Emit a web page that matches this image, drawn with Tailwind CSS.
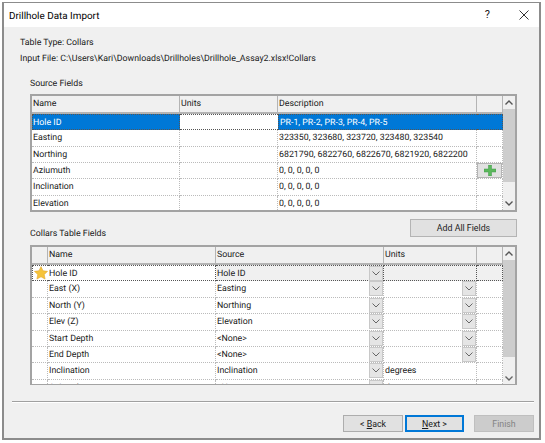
<!DOCTYPE html>
<html lang="en">
<head>
    <meta charset="UTF-8">
    <title>Drillhole Data Import</title>
    <script src="https://cdn.jsdelivr.net/npm/@tailwindcss/browser@4"></script>
</head>
<body class="bg-white overflow-hidden">
    <div class="w-[545px] h-[443px] pt-[2px] pl-[2px] font-['Roboto',sans-serif] text-[8.8px] leading-[14px] text-[#1a1a1a] whitespace-nowrap [text-rendering:geometricPrecision]">
        <div class="w-[539px] h-[438px] border-2 border-t-[1px] border-[#8c8c8c] bg-[#f0f0f0] flex flex-col">
            <!-- title bar -->
            <div class="h-[24px] bg-white flex items-center justify-between shrink-0">
                <span class="ml-[5px] mt-[3px] text-[9.9px] text-black">Drillhole Data Import</span>
                <div class="flex items-center">
                    <span class="text-[11px] mr-[29px]">?</span>
                    <svg class="mr-[10px]" width="10" height="10" viewBox="0 0 10 10"><path d="M.5.5l9 9M9.5.5l-9 9" stroke="#333" stroke-width="1" fill="none"/></svg>
                </div>
            </div>
            <div class="pl-[16px] pt-[9px]">
                <div class="h-[16px]">Table Type: Collars</div>
                <div class="h-[16px]">Input File: C:\Users\Kari\Downloads\Drillholes\Drillhole_Assay2.xlsx!Collars</div>
            </div>
            <div class="pl-[26px] pt-[9px] h-[26px]">Source Fields</div>

            <!-- source fields table -->
            <div class="ml-[26px] w-[487px] h-[118px] border-2 border-[#a3a3a3] flex overflow-hidden shrink-0">
                <div class="w-[471px]">
                    <div class="grid grid-cols-[148px_98px_199px_26px] h-[18px] border-b-2 border-[#b4b4b4] leading-[16px]">
                        <div class="border-r border-[#b4b4b4] pl-[1px]">Name</div>
                        <div class="border-r border-[#b4b4b4] pl-[1px]">Units</div>
                        <div class="border-r border-[#b4b4b4] pl-[1px]">Description</div>
                        <div class="border-r border-[#b4b4b4]"></div>
                    </div>
                    <div class="grid grid-cols-[148px_98px_199px_26px] auto-rows-[16.33px] bg-white leading-[16px]">
                        <div class="bg-[#0078d7] text-white border border-dotted border-[#555]">Hole ID</div>
                        <div class="border-y border-dotted border-[#555]"></div>
                        <div class="bg-[#0078d7] text-white border-y border-l border-dotted border-[#555] pl-[1px]">PR-1, PR-2, PR-3, PR-4, PR-5</div>
                        <div class="bg-[#0078d7] border-y border-r border-dotted border-[#555]"></div>

                        <div class="border-b border-r border-dotted border-[#bbb] pl-[1px]">Easting</div>
                        <div class="border-b border-r border-dotted border-[#bbb]"></div>
                        <div class="border-b border-r border-dotted border-[#bbb] pl-[1px]">323350, 323680, 323720, 323480, 323540</div>
                        <div class="border-b border-r border-dotted border-[#bbb]"></div>

                        <div class="border-b border-r border-dotted border-[#bbb] pl-[1px]">Northing</div>
                        <div class="border-b border-r border-dotted border-[#bbb]"></div>
                        <div class="border-b border-r border-dotted border-[#bbb] pl-[1px]">6821790, 6822760, 6822670, 6821920, 6822200</div>
                        <div class="border-b border-r border-dotted border-[#bbb]"></div>

                        <div class="border-b border-r border-dotted border-[#bbb] pl-[1px]">Aziumuth</div>
                        <div class="border-b border-r border-dotted border-[#bbb]"></div>
                        <div class="border-b border-r border-dotted border-[#bbb] pl-[1px]">0, 0, 0, 0, 0</div>
                        <div class="border-b border-r border-dotted border-[#bbb] flex items-center justify-center">
                            <div class="w-[25px] h-[15px] bg-[#e1e1e1] border border-[#b4b4b4] flex items-center justify-center">
                                <svg width="12" height="11" viewBox="0 0 12 11"><path d="M4.5 0h3v4H12v3H7.5v4h-3V7H0V4h4.5z" fill="#5cb85c" stroke="#3c9a48" stroke-width=".5"/></svg>
                            </div>
                        </div>

                        <div class="border-b border-r border-dotted border-[#bbb] pl-[1px]">Inclination</div>
                        <div class="border-b border-r border-dotted border-[#bbb]"></div>
                        <div class="border-b border-r border-dotted border-[#bbb] pl-[1px]">0, 0, 0, 0, 0</div>
                        <div class="border-b border-r border-dotted border-[#bbb]"></div>

                        <div class="border-r border-dotted border-[#bbb] pl-[1px]">Elevation</div>
                        <div class="border-r border-dotted border-[#bbb]"></div>
                        <div class="border-r border-dotted border-[#bbb] pl-[1px]">0, 0, 0, 0, 0</div>
                        <div class="border-r border-dotted border-[#bbb]"></div>
                    </div>
                </div>
                <!-- scrollbar -->
                <div class="w-[12px] bg-[#f0f0f0] flex flex-col items-center">
                    <div class="h-[13px] flex items-center justify-center shrink-0">
                        <svg width="8" height="5" viewBox="0 0 8 5"><path d="M.5 4.5L4 1l3.5 3.5" stroke="#555" stroke-width="1.4" fill="none"/></svg>
                    </div>
                    <div class="w-full h-[73px] bg-[#cdcdcd] shrink-0"></div>
                    <div class="h-[14px] mt-[14px] flex items-center justify-center shrink-0">
                        <svg width="8" height="5" viewBox="0 0 8 5"><path d="M.5.5L4 4 7.5.5" stroke="#555" stroke-width="1.4" fill="none"/></svg>
                    </div>
                </div>
            </div>

            <div class="ml-[26px] w-[487px] flex items-start justify-between h-[33px] shrink-0">
                <span class="mt-[15px]">Collars Table Fields</span>
                <button class="mt-[7px] w-[107px] h-[18px] bg-[#e1e1e1] border border-[#b4b4b4] text-[8.8px] leading-[14px]">Add All Fields</button>
            </div>

            <!-- collars table -->
            <div class="ml-[26px] w-[487px] h-[140px] border-2 border-b-[1px] border-[#a3a3a3] flex overflow-hidden shrink-0">
                <div class="w-[471px]">
                    <div class="grid grid-cols-[16px_168px_168px_93px_26px] h-[18px] border-b-2 border-[#b4b4b4] leading-[17px]">
                        <div class="border-r border-[#b4b4b4]"></div>
                        <div class="border-r border-[#b4b4b4] pl-[1px]">Name</div>
                        <div class="border-r border-[#b4b4b4] pl-[1px]">Source</div>
                        <div class="border-r border-[#b4b4b4] pl-[1px]">Units</div>
                        <div class="border-r border-[#b4b4b4]"></div>
                    </div>
                    <div class="grid grid-cols-[16px_168px_168px_93px_26px] auto-rows-[16.4px] bg-white leading-[16px]">
                        <div class="border-y border-l border-dotted border-[#555] flex items-center justify-center">
                            <svg width="14" height="14" viewBox="0 0 24 24"><path d="M12 1l3.4 7.2 7.9 1-5.8 5.4 1.5 7.8-7-3.9-7 3.9 1.5-7.8L.7 9.2l7.9-1z" fill="#f5c33b" stroke="#e3a62a" stroke-width="1"/></svg>
                        </div>
                        <div class="border-y border-r border-dotted border-[#555] pl-[1px]">Hole ID</div>
                        <div class="border-y border-r border-dotted border-[#555] bg-[#f0f0f0] pl-[1px] flex justify-between">
                            <span>Hole ID</span>
                            <span class="w-[14px] h-[15px] bg-[#e5e5e5] border border-[#c8c8c8] flex items-center justify-center shrink-0"><svg width="8" height="5" viewBox="0 0 8 5"><path d="M.5.5L4 4 7.5.5" stroke="#666" fill="none"/></svg></span>
                        </div>
                        <div class="border-y border-r border-dotted border-[#555] bg-[#f0f0f0]"></div>
                        <div class="border-y border-r border-dotted border-[#555] bg-[#f0f0f0]"></div>

                        <div class="border-b border-r border-dotted border-[#bbb]"></div>
                        <div class="border-b border-r border-dotted border-[#bbb] pl-[1px]">East (X)</div>
                        <div class="border-b border-r border-dotted border-[#bbb] pl-[1px] flex justify-between">
                            <span>Easting</span>
                            <span class="w-[14px] h-[15px] bg-[#e5e5e5] border border-[#c8c8c8] flex items-center justify-center shrink-0"><svg width="8" height="5" viewBox="0 0 8 5"><path d="M.5.5L4 4 7.5.5" stroke="#666" fill="none"/></svg></span>
                        </div>
                        <div class="border-b border-r border-dotted border-[#bbb] flex justify-end">
                            <span class="w-[14px] h-[15px] bg-[#e5e5e5] border border-[#c8c8c8] flex items-center justify-center shrink-0"><svg width="8" height="5" viewBox="0 0 8 5"><path d="M.5.5L4 4 7.5.5" stroke="#666" fill="none"/></svg></span>
                        </div>
                        <div class="border-b border-r border-dotted border-[#bbb]"></div>

                        <div class="border-b border-r border-dotted border-[#bbb]"></div>
                        <div class="border-b border-r border-dotted border-[#bbb] pl-[1px]">North (Y)</div>
                        <div class="border-b border-r border-dotted border-[#bbb] pl-[1px] flex justify-between">
                            <span>Northing</span>
                            <span class="w-[14px] h-[15px] bg-[#e5e5e5] border border-[#c8c8c8] flex items-center justify-center shrink-0"><svg width="8" height="5" viewBox="0 0 8 5"><path d="M.5.5L4 4 7.5.5" stroke="#666" fill="none"/></svg></span>
                        </div>
                        <div class="border-b border-r border-dotted border-[#bbb] flex justify-end">
                            <span class="w-[14px] h-[15px] bg-[#e5e5e5] border border-[#c8c8c8] flex items-center justify-center shrink-0"><svg width="8" height="5" viewBox="0 0 8 5"><path d="M.5.5L4 4 7.5.5" stroke="#666" fill="none"/></svg></span>
                        </div>
                        <div class="border-b border-r border-dotted border-[#bbb]"></div>

                        <div class="border-b border-r border-dotted border-[#bbb]"></div>
                        <div class="border-b border-r border-dotted border-[#bbb] pl-[1px]">Elev (Z)</div>
                        <div class="border-b border-r border-dotted border-[#bbb] pl-[1px] flex justify-between">
                            <span>Elevation</span>
                            <span class="w-[14px] h-[15px] bg-[#e5e5e5] border border-[#c8c8c8] flex items-center justify-center shrink-0"><svg width="8" height="5" viewBox="0 0 8 5"><path d="M.5.5L4 4 7.5.5" stroke="#666" fill="none"/></svg></span>
                        </div>
                        <div class="border-b border-r border-dotted border-[#bbb] flex justify-end">
                            <span class="w-[14px] h-[15px] bg-[#e5e5e5] border border-[#c8c8c8] flex items-center justify-center shrink-0"><svg width="8" height="5" viewBox="0 0 8 5"><path d="M.5.5L4 4 7.5.5" stroke="#666" fill="none"/></svg></span>
                        </div>
                        <div class="border-b border-r border-dotted border-[#bbb]"></div>

                        <div class="border-b border-r border-dotted border-[#bbb]"></div>
                        <div class="border-b border-r border-dotted border-[#bbb] pl-[1px]">Start Depth</div>
                        <div class="border-b border-r border-dotted border-[#bbb] pl-[1px] flex justify-between">
                            <span>&lt;None&gt;</span>
                            <span class="w-[14px] h-[15px] bg-[#e5e5e5] border border-[#c8c8c8] flex items-center justify-center shrink-0"><svg width="8" height="5" viewBox="0 0 8 5"><path d="M.5.5L4 4 7.5.5" stroke="#666" fill="none"/></svg></span>
                        </div>
                        <div class="border-b border-r border-dotted border-[#bbb] flex justify-end">
                            <span class="w-[14px] h-[15px] bg-[#e5e5e5] border border-[#c8c8c8] flex items-center justify-center shrink-0"><svg width="8" height="5" viewBox="0 0 8 5"><path d="M.5.5L4 4 7.5.5" stroke="#666" fill="none"/></svg></span>
                        </div>
                        <div class="border-b border-r border-dotted border-[#bbb]"></div>

                        <div class="border-b border-r border-dotted border-[#bbb]"></div>
                        <div class="border-b border-r border-dotted border-[#bbb] pl-[1px]">End Depth</div>
                        <div class="border-b border-r border-dotted border-[#bbb] pl-[1px] flex justify-between">
                            <span>&lt;None&gt;</span>
                            <span class="w-[14px] h-[15px] bg-[#e5e5e5] border border-[#c8c8c8] flex items-center justify-center shrink-0"><svg width="8" height="5" viewBox="0 0 8 5"><path d="M.5.5L4 4 7.5.5" stroke="#666" fill="none"/></svg></span>
                        </div>
                        <div class="border-b border-r border-dotted border-[#bbb] flex justify-end">
                            <span class="w-[14px] h-[15px] bg-[#e5e5e5] border border-[#c8c8c8] flex items-center justify-center shrink-0"><svg width="8" height="5" viewBox="0 0 8 5"><path d="M.5.5L4 4 7.5.5" stroke="#666" fill="none"/></svg></span>
                        </div>
                        <div class="border-b border-r border-dotted border-[#bbb]"></div>

                        <div class="border-b border-r border-dotted border-[#bbb]"></div>
                        <div class="border-b border-r border-dotted border-[#bbb] pl-[1px]">Inclination</div>
                        <div class="border-b border-r border-dotted border-[#bbb] pl-[1px] flex justify-between">
                            <span>Inclination</span>
                            <span class="w-[14px] h-[15px] bg-[#e5e5e5] border border-[#c8c8c8] flex items-center justify-center shrink-0"><svg width="8" height="5" viewBox="0 0 8 5"><path d="M.5.5L4 4 7.5.5" stroke="#666" fill="none"/></svg></span>
                        </div>
                        <div class="border-b border-r border-dotted border-[#bbb] pl-[1px]">degrees</div>
                        <div class="border-b border-r border-dotted border-[#bbb]"></div>

                        <div class="border-r border-dotted border-[#bbb]"></div>
                        <div class="border-r border-dotted border-[#bbb] pl-[1px]">Azimuth</div>
                        <div class="border-r border-dotted border-[#bbb] pl-[1px] flex justify-between">
                            <span>&lt;None&gt;</span>
                            <span class="w-[14px] h-[15px] bg-[#e5e5e5] border border-[#c8c8c8] flex items-center justify-center shrink-0"><svg width="8" height="5" viewBox="0 0 8 5"><path d="M.5.5L4 4 7.5.5" stroke="#666" fill="none"/></svg></span>
                        </div>
                        <div class="border-r border-dotted border-[#bbb] pl-[1px]">degrees</div>
                        <div class="border-r border-dotted border-[#bbb]"></div>
                    </div>
                </div>
                <div class="w-[12px] bg-[#f0f0f0] flex flex-col items-center">
                    <div class="h-[13px] flex items-center justify-center shrink-0">
                        <svg width="8" height="5" viewBox="0 0 8 5"><path d="M.5 4.5L4 1l3.5 3.5" stroke="#555" stroke-width="1.4" fill="none"/></svg>
                    </div>
                    <div class="w-full h-[97px] bg-[#cdcdcd] shrink-0"></div>
                    <div class="h-[14px] mt-[14px] flex items-center justify-center shrink-0">
                        <svg width="8" height="5" viewBox="0 0 8 5"><path d="M.5.5L4 4 7.5.5" stroke="#666" stroke-width="1.4" fill="none"/></svg>
                    </div>
                </div>
            </div>

            <!-- footer -->
            <div class="mt-[16px] ml-[8px] w-[522px] h-[2px] bg-[#a0a0a0] border-b border-white shrink-0"></div>
            <div class="mt-[12px] flex justify-end pr-[5px] gap-[2px]">
                <button class="w-[60px] h-[17px] bg-[#e1e1e1] border border-[#adadad] text-[8.8px] leading-[14px]">&lt; <u>B</u>ack</button>
                <button class="w-[59px] h-[17px] bg-[#e1e1e1] border-2 border-[#0078d7] text-[8.8px] leading-[12px]"><u>N</u>ext &gt;</button>
                <button class="ml-[8px] w-[60px] h-[17px] bg-[#cccccc] border border-[#bfbfbf] text-[#838383] text-[8.8px] leading-[14px]">Finish</button>
            </div>
        </div>
    </div>
</body>
</html>
